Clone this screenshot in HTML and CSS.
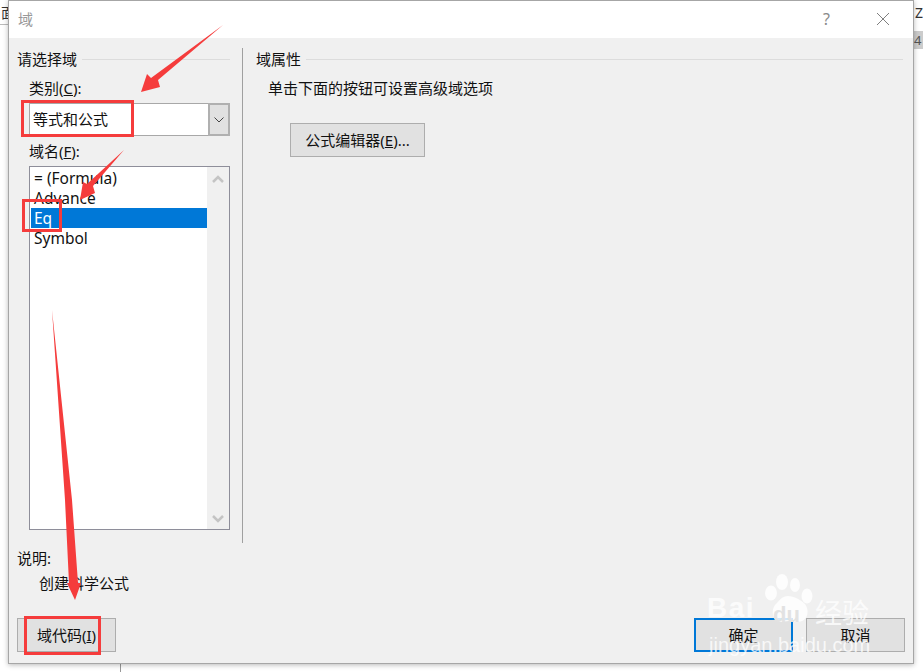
FILE: index.html
```html
<!DOCTYPE html>
<html lang="zh">
<head>
<meta charset="utf-8">
<title>域</title>
<link rel="stylesheet" href="styles.css">
</head>
<body>
<div class="backdrop">
  <span class="bg-char bg-left">面</span>
  <span class="bg-line bg-left-line"></span>
  <span class="bg-char bg-z">Z</span>
  <span class="bg-cell">4</span>
  <span class="bg-vline"></span>
</div>
<main class="dialog">
  <header class="titlebar">
    <span class="title">域</span>
    <span class="help">?</span>
    <svg class="close" width="14" height="14" viewBox="0 0 14 14"><path d="M1 1 13 13M13 1 1 13" stroke="#7f7f7f" stroke-width="1" fill="none"/></svg>
  </header>
  <div class="content">
    <section class="left">
      <div class="group-head"><span>请选择域</span><i></i></div>
      <div class="indent">
        <label class="field-label">类别(<u>C</u>):</label>
        <div class="combo">
          <span class="combo-value">等式和公式</span>
          <span class="combo-btn"><svg width="10" height="6" viewBox="0 0 10 6"><path d="M.5.5 5 5 9.500.5" stroke="#444" fill="none"/></svg></span>
        </div>
        <label class="field-label label-name">域名(<u>F</u>):</label>
        <div class="list">
          <ul class="items">
            <li>= (Formula)</li>
            <li>Advance</li>
            <li class="selected">Eq</li>
            <li>Symbol</li>
          </ul>
          <div class="scroll">
            <svg width="14" height="8" viewBox="0 0 14 8"><path d="M2 7 7 2 12 7" stroke="#c4c4c4" stroke-width="2.500" fill="none"/></svg>
            <svg width="14" height="8" viewBox="0 0 14 8"><path d="M2 1 7 6 12 1" stroke="#c4c4c4" stroke-width="2.500" fill="none"/></svg>
          </div>
        </div>
      </div>
    </section>
    <section class="right">
      <div class="group-head"><span>域属性</span><i></i></div>
      <p class="hint">单击下面的按钮可设置高级域选项</p>
      <button class="btn btn-editor">公式编辑器(<u>E</u>)...</button>
    </section>
  </div>
  <div class="desc">
    <div class="desc-label">说明:</div>
    <div class="desc-text">创建科学公式</div>
  </div>
  <footer class="footer">
    <button class="btn btn-code">域代码(<u>I</u>)</button>
    <div class="actions">
      <button class="btn btn-ok">确定</button>
      <button class="btn btn-cancel">取消</button>
    </div>
  </footer>
</main>

<svg class="annot" width="923" height="672" viewBox="0 0 923 672">
  <g fill="#f53c3c">
    <path d="M223 25 158 80 160 87 141 92 147 74 151 78Z"/>
    <path d="M124 150 93 186 95 193 80 200 83 182 87 184Z"/>
    <path d="M52 310 65 500 69 583 67 583 75 600 81 583 78 583 72 500Z"/>
  </g>
  <g fill="none" stroke="#f53c3c" stroke-width="3">
    <rect x="22.500" y="101.500" width="110" height="34"/>
    <rect x="23.500" y="200.500" width="37" height="30"/>
    <rect x="25.500" y="617.500" width="74" height="36"/>
  </g>
</svg>

<div class="watermark">
  <svg class="paw" width="56" height="54" viewBox="0 0 56 54">
    <g fill="#fff" fill-opacity=".82">
      <ellipse cx="11" cy="21" rx="6" ry="7.500"/>
      <ellipse cx="22" cy="10" rx="6" ry="8"/>
      <ellipse cx="35" cy="13" rx="5" ry="7"/>
      <ellipse cx="47" cy="24" rx="5.500" ry="7.500"/>
      <path d="M28 24c-6 0-8 4-12 8-5 4-5 18 5 18 3 0 5-1 8-1s5 1 8 1c11 0 13-11 8-18-4-4-11-8-17-8Z"/>
    </g>
  </svg>
  <span class="wm-bai">Bai</span>
  <span class="wm-du">du</span>
  <span class="wm-jy">经验</span>
  <span class="wm-url">jingyan.baidu.com</span>
</div>
</body>
</html>
```

FILE: styles.css
```css
* { box-sizing: border-box; }
html, body { margin: 0; height: 100%; }
body {
  width: 923px;
  height: 672px;
  overflow: hidden;
  position: relative;
  background: #fff;
  font-family: "Noto Sans", "Noto Sans CJK SC", sans-serif;
  font-size: 15px;
  line-height: 20px;
  color: #111;
}
.backdrop { position: absolute; inset: 0; }
.bg-char { position: absolute; font-size: 14px; color: #333; }
.bg-left { left: 1px; top: 3px; }
.bg-left-line { position: absolute; left: 0; top: 24px; width: 8px; height: 1px; background: #bbb; }
.bg-z { left: 915px; top: 3px; }
.bg-cell { position: absolute; left: 914px; top: 31px; width: 9px; height: 18px; background: #ccc; font-size: 13px; color: #555; line-height: 18px; overflow: hidden; }
.bg-vline { position: absolute; left: 120px; top: 662px; width: 1px; height: 10px; background: #999; }

.dialog {
  position: absolute;
  left: 8px;
  top: 0;
  width: 906px;
  height: 664px;
  background: #f0f0f0;
  border: 1px solid #a6a6a6;
  box-shadow: 0 1px 5px rgba(0,0,0,.28);
  display: flex;
  flex-direction: column;
}
.titlebar {
  height: 37px;
  flex: none;
  background: #fff;
  display: flex;
  align-items: center;
  padding: 0 23px 0 9px;
}
.title { color: #999; font-size: 15px; flex: 1; margin-top: -2px; }
.help { color: #8a8a8a; font-size: 16px; margin-right: 46px; margin-top: -2px; }
.close { display: block; margin-top: -1px; }

.content { flex: none; height: 505px; display: flex; }
.left { width: 233px; padding: 11px 0 0 8px; flex: none; }
.right { flex: 1; border-left: 1px solid #a0a0a0; padding: 1px 10px 0 13px; margin-top: 10px; }
.group-head { display: flex; align-items: center; gap: 5px; }
.group-head i { flex: 1; height: 1px; background: #dcdcdc; }
.left .group-head { margin-right: 12px; }
.indent { padding: 10px 12px 0 12px; }
.field-label { display: block; line-height: 20px; margin-top: -1px; }
.combo {
  margin-top: 5px;
  height: 33px;
  display: flex;
  background: #fff;
  border: 1px solid #a8a8a8;
}
.combo-value { flex: 1; padding: 5px 0 0 3px; }
.combo-btn { width: 22px; background: #e1e1e1; border: 2px solid #b0b0b0; display: flex; align-items: center; justify-content: center; margin: -1px -1px -1px 0; }
.label-name { margin-top: 5px; }
.list {
  margin-top: 5px;
  height: 364px;
  display: flex;
  background: #fff;
  border: 1px solid #8e8e9a;
}
.items { list-style: none; margin: 0; padding: 0; flex: 1; font-size: 15.500px; }
.items li { height: 20px; line-height: 20px; padding-left: 3px; margin-left: 1px; }
.items li:first-child { margin-top: 1px; }
.items .selected { background: #0078d7; color: #fff; }
.scroll { width: 22px; background: #f0f0f0; display: flex; flex-direction: column; justify-content: space-between; align-items: center; padding: 8px 0 6px; }
.scroll svg { display: block; }

.hint { margin: 9px 0 0 12px; line-height: 20px; }
.btn {
  font: inherit;
  color: #111;
  background: #e1e1e1;
  border: 1px solid #adadad;
  padding: 0;
  height: 34px;
  display: block;
}
.btn-editor { width: 135px; margin: 25px 0 0 34px; }

.desc { flex: none; padding-left: 8px; height: 75px; padding-top: 5px; }
.desc-text { padding-left: 22px; margin-top: 5px; }
.footer { flex: none; display: flex; justify-content: space-between; padding: 0 8px 0 8px; }
.btn-code { width: 99px; }
.actions { display: flex; gap: 13px; }
.btn-ok, .btn-cancel { width: 99px; }
.btn-ok { border: 2px solid #0078d7; }

.annot { position: absolute; left: 0; top: 0; pointer-events: none; }
.watermark { position: absolute; left: 700px; top: 570px; width: 180px; height: 90px; color: rgba(255,255,255,.78); font-family: "Liberation Sans", sans-serif; }
.paw { position: absolute; left: 60px; top: 2px; }
.wm-bai { position: absolute; left: 7px; top: 22px; font-size: 28px; line-height: 32px; font-weight: 700; letter-spacing: 1.500px; }
.wm-du { position: absolute; left: 73px; top: 33px; font-size: 22px; line-height: 24px; font-weight: 700; color: #e2e2e2; }
.wm-jy { position: absolute; left: 115px; top: 24px; font-size: 27px; line-height: 36px; font-family: "Noto Sans CJK SC", sans-serif; }
.wm-url { position: absolute; left: 9px; top: 63px; font-size: 20px; line-height: 24px; }
```
